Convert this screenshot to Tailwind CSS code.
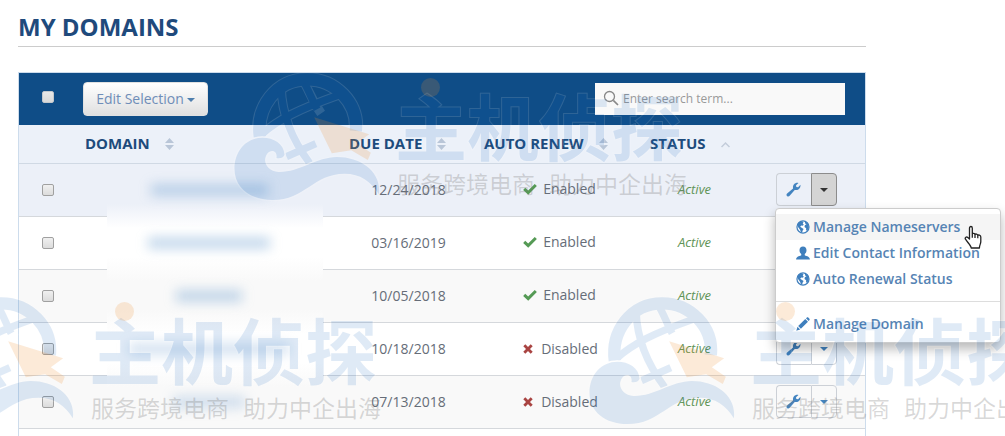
<!DOCTYPE html>
<html lang="en">
<head>
<meta charset="utf-8">
<title>My Domains</title>
<script src="https://cdn.jsdelivr.net/npm/@tailwindcss/browser@4"></script>
</head>
<body class="bg-white">
<svg class="hidden" aria-hidden="true">
  <symbol id="wrench" viewBox="0 0 16 16"><path fill="currentColor" d="M1.1 14.9C.3 14.1.4 13 1.2 12.200L7.500 6.800C6.900 4.400 8.200 1.900 10.600 1.100 11.500.8 12.500.8 13.300 1.100L10.700 3.400 11 5.300 12.900 5.500 15.400 3C15.700 4.900 14.900 7 13.200 7.900 12 8.600 10.600 8.700 9.300 8.400L3.900 14.700C3.200 15.600 1.900 15.700 1.100 14.900Z"/></symbol>
  <symbol id="globe" viewBox="0 0 16 16"><circle cx="8" cy="8" r="6.900" fill="#fff" stroke="currentColor" stroke-width="1.400"/><path fill="currentColor" d="M1.500 5C2.500 2.800 4.500 1.300 7 1.300L8.500 2.500 7.700 4.200 9 5.500 7.400 6.500 6 6.300 4.800 7.800 6.500 8.800 8.700 10.200 7.500 12.200 7 14.600C5 14 5.300 11.500 4 10.200L2.300 8ZM10 1.600C12.500 2.200 14 3.800 14.500 6L14.600 9 12.600 12.600 11.500 11.500 11.600 9.500 9.700 8 10.200 5.800 12 5.200 10.500 4Z"/></symbol>
  <symbol id="user" viewBox="0 0 16 16"><path fill="currentColor" d="M8 .5C10.500.5 12 2.200 12 4.800 12 6.700 11.200 8.200 10 9.200V10.500C10.500 11.200 15.700 11.500 15.900 15.300H.1C.3 11.500 5.500 11.200 6 10.500V9.200C4.800 8.200 4 6.700 4 4.800 4 2.200 5.500.5 8 .5Z"/></symbol>
  <symbol id="pencil" viewBox="0 0 16 16"><path fill="currentColor" d="M.3 15.700 1.700 11.200 4.800 14.300ZM2.500 10.400 10.600 2.300 13.700 5.400 5.600 13.500ZM11.400 1.500 12.500.5C13 .1 13.500.1 14 .6L15.400 2C15.800 2.400 15.800 2.900 15.400 3.400L14.500 4.600Z"/></symbol>
  <symbol id="check" viewBox="0 0 14 12"><path fill="none" stroke="currentColor" stroke-width="3" d="M1.200 5.800 5.200 9.600 12.800 2"/></symbol>
  <symbol id="cross" viewBox="0 0 10 10"><path fill="none" stroke="currentColor" stroke-width="2.800" d="M1.300 1.200 8.700 8.800M8.700 1.200 1.300 8.800"/></symbol>
  <symbol id="sort" viewBox="0 0 9 12"><path fill="currentColor" d="M4.500 0 9 5H0ZM4.500 12 0 7H9Z"/></symbol>
  <symbol id="mark" viewBox="24 48 440 390">
    <g opacity=".13">
      <g fill="none" stroke="#fff">
        <path stroke-width="43" d="M104 243C92 155 152 70 246 70 330 70 400 140 392 225"/>
        <path stroke-width="28" d="M108 236C160 190 220 160 338 118M168 95C170 170 200 250 254 322M238 82C252 105 262 135 288 172M184 302 272 263"/>
      </g>
      <g fill="none" stroke="#1464be">
        <path stroke-width="37" d="M104 243C92 155 152 70 246 70 330 70 400 140 392 225"/>
        <path stroke-width="22" d="M108 236C160 190 220 160 338 118M168 95C170 170 200 250 254 322M238 82C252 105 262 135 276 160M184 302 272 263"/>
      </g>
      <path fill="#1464be" stroke="#fff" stroke-width="8" style="paint-order:stroke" d="M178 296C176 262 145 245 112 245 62 245 28 286 28 338 28 395 76 432 142 432 240 432 265 353 358 353 405 353 438 376 461 415 470 350 410 303 335 303 275 303 220 350 160 348 126 346 110 316 126 293 137 278 158 284 154 306 165 308 175 305 178 296Z"/>
    </g>
    <path fill="#f0922e" opacity=".19" d="M267 184 432 235 395 262 437 290 428 312 378 283 320 292Z"/>
  </symbol>
</svg>

<div class="relative h-screen overflow-hidden font-['Open_Sans',sans-serif] text-sm text-[#666d78]">
  <main class="ml-[18px] mr-[139px] pt-[10px]">
    <h1 class="h-[37px] border-b border-[#ccc] text-2xl leading-[34px] font-bold text-[#1f4a7c]">MY DOMAINS</h1>
    <section class="mt-[25px] border border-[#cddcec]">
      <div class="flex h-[52px] items-center bg-[#0f4d87] pr-5">
        <div class="flex w-[58px] justify-center pb-1"><input type="checkbox" aria-label="Select all domains" class="size-3 appearance-none rounded-xs border border-[#c4c8cc] bg-linear-to-b from-[#e8e8e8] to-[#d9d9d9]"></div>
        <button class="ml-[6px] flex h-[34px] w-[125px] items-center justify-center gap-[3px] rounded border border-[#e1e1e1] bg-linear-to-b from-white to-[#e0e0e0] text-sm text-[#6f8db8]">Edit Selection<span class="mt-[2px] border-x-4 border-t-4 border-x-transparent border-t-[#4f7fae]"></span></button>
        <label class="ml-auto flex h-8 w-[250px] items-center bg-[#f9f9f9] pl-2">
          <svg class="mb-[3px] size-4 text-[#888]" viewBox="0 0 16 16" fill="none" stroke="currentColor"><circle cx="6.500" cy="6.500" r="5" stroke-width="1.300"/><path d="M10.300 10.300 15 15" stroke-width="1.700"/></svg>
          <input type="text" aria-label="Search domains" placeholder="Enter search term..." class="ml-1 min-w-0 flex-1 bg-transparent text-xs placeholder:text-[#999] outline-none">
        </label>
      </div>
      <table class="w-full table-fixed border-separate border-spacing-0 text-center [&_td]:h-[53px] [&_td]:border-b [&_td]:border-[#d5d8dc] [&_td]:p-0 [&_td]:pb-px [&_th]:h-[39px] [&_th]:border-b [&_th]:border-[#d0d9e4] [&_th]:bg-[#ecf1f9] [&_th]:px-2 [&_th]:py-0">
        <colgroup><col class="w-[58px]"><col><col class="w-[135px]"><col class="w-[166px]"><col class="w-[105px]"><col class="w-[118px]"></colgroup>
        <thead class="text-left text-[15px] text-[#1d4b7c]">
          <tr>
            <th></th>
            <th class="font-bold"><span class="flex items-center gap-[15px]">DOMAIN<svg class="h-3 w-[9px] text-[#b9c6d8]"><use href="#sort"/></svg></span></th>
            <th class="font-bold"><span class="flex items-center gap-[15px] whitespace-nowrap">DUE DATE<svg class="h-3 w-[9px] text-[#b9c6d8]"><use href="#sort"/></svg></span></th>
            <th class="font-bold"><span class="flex items-center gap-[15px] whitespace-nowrap">AUTO RENEW<svg class="h-3 w-[9px] text-[#b9c6d8]"><use href="#sort"/></svg></span></th>
            <th class="font-bold"><span class="flex items-center gap-[15px]">STATUS<svg class="size-[9px] shrink-0 text-[#c3ccda]" viewBox="0 0 9 9" fill="none" stroke="currentColor" stroke-width="1.500"><path d="M.5 8 4.500 4 8.500 8"/></svg></span></th>
            <th></th>
          </tr>
        </thead>
        <tbody id="rows"></tbody>
      </table>
    </section>
  </main>

  <nav id="menu" aria-label="Domain actions" class="absolute top-[208px] right-1 w-[226px] rounded border border-[#ccc] bg-white pt-[5px] pb-[5px] text-[14px] leading-[26px] font-semibold text-[#5684b4] shadow-[0_6px_12px_rgba(0,0,0,0.28)]">
    <a href="#" class="flex h-[26px] items-center gap-[3px] bg-[#f5f5f5] pl-5 whitespace-nowrap"><svg class="size-[14px] shrink-0 text-[#3f7fbd]"><use href="#globe"/></svg>Manage Nameservers</a>
    <a href="#" class="flex h-[26px] items-center gap-[3px] pl-5 whitespace-nowrap"><svg class="size-[14px] shrink-0 text-[#3f7fbd]"><use href="#user"/></svg>Edit Contact Information</a>
    <a href="#" class="flex h-[26px] items-center gap-[3px] pl-5 whitespace-nowrap"><svg class="size-[14px] shrink-0 text-[#3f7fbd]"><use href="#globe"/></svg>Auto Renewal Status</a>
    <hr class="mt-[9px] mb-[9px] border-[#ddd]">
    <a href="#" class="flex h-[26px] items-center gap-[3px] pl-5 whitespace-nowrap"><svg class="size-[14px] shrink-0 text-[#3f7fbd]"><use href="#pencil"/></svg>Manage Domain</a>
  </nav>

  <div class="pointer-events-none absolute inset-0 overflow-hidden font-['Noto_Sans_CJK_SC',sans-serif]" id="marks" aria-hidden="true"></div>

  <svg class="absolute top-[225px] left-[964px] h-6 w-[19px]" viewBox="0 0 19 24"><path fill="#fff" stroke="#222" stroke-width="1.300" stroke-linejoin="round" d="M5.500 14V3.200C5.500 .9 8.300.9 8.300 3.200V9.500C8.300 7.800 11 8 11 9.800 11.200 8.500 13.800 8.800 13.800 10.600 14.200 9.500 16.800 10 16.800 12V16.500C16.800 19 15.500 19.800 15.400 23H7.200C7 20.500 3.500 17.500 1.500 14.200.5 12.300 2.600 11.400 3.800 12.500ZM8.300 9.500V12.800M11 9.800V13M13.800 10.600V13.300"/></svg>
</div>

<script>
const rows = [
  {date: '12/24/2018', on: true,  bar: 'w-[117px]', bg: 'bg-[#ecf0f8]', fade: 'from-[#ecf0f8] to-white', open: true},
  {date: '03/16/2019', on: true,  bar: 'w-[122px]', bg: 'bg-white', fade: 'from-white to-[#f9f9f9]'},
  {date: '10/05/2018', on: true,  bar: 'w-[66px]',  bg: 'bg-[#f9f9f9]', fade: 'from-[#f9f9f9] to-white'},
  {date: '10/18/2018', on: false, bar: 'w-[160px]', bg: 'bg-white', fade: 'from-white to-[#f9f9f9]', faint: true},
  {date: '07/13/2018', on: false, bar: 'w-[72px]',  bg: 'bg-[#f9f9f9]', fade: '', faint: true},
];
document.getElementById('rows').innerHTML = rows.map(r => `
  <tr class="${r.bg}">
    <td><input type="checkbox" aria-label="Select domain due ${r.date}" class="mx-auto block size-3 appearance-none rounded-xs border border-[#a0a0a0] bg-linear-to-b from-[#f0f0f0] to-[#dcdcdc]"></td>
    <td class="relative">
      ${r.fade ? `<div class="absolute -bottom-3 right-[18px] left-[30px] h-6 bg-linear-to-b ${r.fade}"></div>` : ''}
      <div class="relative mx-auto h-3 ${r.bar} ${r.faint ? 'bg-[#6f9fd0]/30' : 'bg-[#6f9fd0]/40'} blur-[6px]"></div>
    </td>
    <td>${r.date}</td>
    <td><span class="inline-flex items-center gap-[6px] pl-px">${r.on
      ? '<svg class="h-3 w-[14px] text-[#559a55]"><use href="#check"/></svg>Enabled'
      : '<svg class="ml-[2px] mr-[2px] size-[10px] text-[#a94442]"><use href="#cross"/></svg>Disabled'}</span></td>
    <td class="text-[13px] text-[#5f9457] italic">Active</td>
    <td><div class="mx-auto flex h-[33px] w-[61px]">
      <button aria-label="Manage domain" class="flex flex-1 items-center justify-center rounded-l border border-r-0 border-[#ccd0d6]"><svg class="size-[15px] text-[#4384c0]"><use href="#wrench"/></svg></button>
      <button aria-label="More actions" class="flex w-[26px] items-center justify-center rounded-r border ${r.open ? 'border-[#8c8c8c] bg-[#d4d4d4]' : 'border-[#ccd0d6]'}"><span class="border-x-4 border-t-4 border-x-transparent ${r.open ? 'border-t-[#333]' : 'border-t-[#4384c0]'}"></span></button>
    </div></td>
  </tr>`).join('') + '<tr><td></td><td></td><td></td><td></td><td></td><td></td></tr>';

document.getElementById('marks').innerHTML = [
  'top-[73px] left-[234px]',
  'top-[297px] left-[589px]',
  'top-[297px] -left-[72px]',
].map(p => `
  <div class="absolute ${p} h-[130px] w-[455px]">
    <svg class="absolute -top-px -left-px h-[130px] w-[147px]"><use href="#mark"/></svg>
    <span class="absolute top-[15px] left-[161px] text-[72px] leading-[72px] font-bold whitespace-nowrap text-[#1464be] opacity-13 [-webkit-text-stroke:2px_white] [paint-order:stroke]">主机侦探</span>
    <span class="absolute top-[5px] left-[187px] size-[19px] rounded-full bg-[#f0922e]/19"></span>
    <span class="absolute top-[97px] left-[163px] flex gap-[14px] text-[23px] leading-[26px] whitespace-nowrap text-[#777]/28"><span>服务跨境电商</span><span>助力中企出海</span></span>
  </div>`).join('');
</script>
</body>
</html>
